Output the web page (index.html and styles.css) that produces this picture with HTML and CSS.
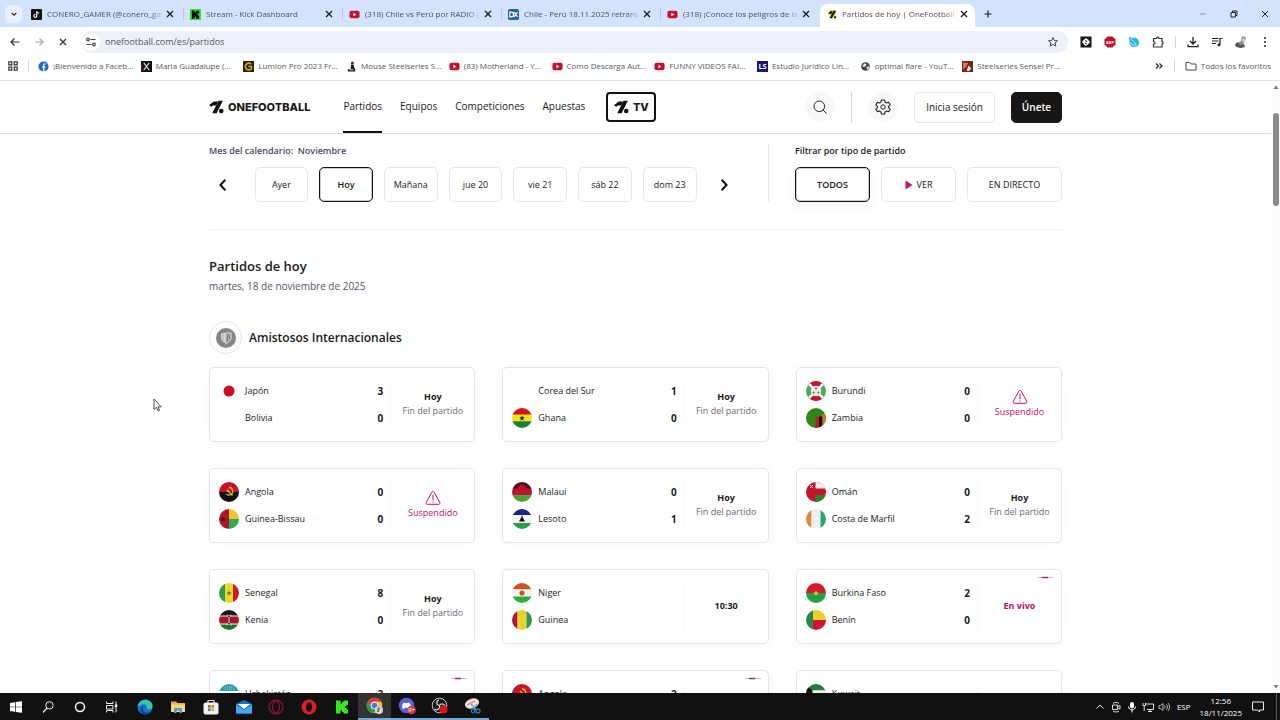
FILE: index.html
```html
<!DOCTYPE html>
<html lang="es">
<head>
    <meta charset="UTF-8">
    <meta name="viewport" content="width=device-width, initial-scale=1.0">
    <title>Partidos de hoy | OneFootball</title>
    <link rel="stylesheet" href="styles.css">
</head>
<body>

    <!-- Shared icons -->
    <svg class="sprite" aria-hidden="true">
        <symbol id="i-x" viewBox="0 0 10 10"><path d="M2 2l6 6M8 2l-6 6" fill="none" stroke="currentColor" stroke-width="1.3"/></symbol>
        <symbol id="i-yt" viewBox="0 0 12 12"><rect x="0.5" y="2" width="11" height="8" rx="2" fill="#c8102e"/><path d="M4.8 4.2v3.6L8 6z" fill="#fff"/></symbol>
        <symbol id="i-mark" viewBox="0 0 15 14"><path d="M0 5.2L4.8 1.6H9L7 5.6H3.8L2.2 6.8zM9.6 0.8h4.2L7.6 13.2H3.2z" fill="#111"/><circle cx="12.2" cy="11" r="2.3" fill="#111"/></symbol>
        <symbol id="i-warn" viewBox="0 0 16 16"><path d="M6.8 2.2L1.2 12.4C.7 13.4 1.3 14.3 2.4 14.3H13.6C14.7 14.3 15.3 13.4 14.8 12.4L9.2 2.2C8.7 1.2 7.3 1.2 6.8 2.2Z" fill="none" stroke="#c0106a"/><path d="M8 4.5v6M8 11.5v1.2" stroke="#c0106a" fill="none"/></symbol>
        <symbol id="i-live" viewBox="0 0 16 3"><path d="M0 1.5h16" stroke="#e3b5c3"/><path d="M4 1.5h6" stroke="#9c3040" stroke-width="1.5"/></symbol>
    </svg>

    <!-- Tab strip -->
    <div class="tabs">
        <button class="tab-search" aria-label="Buscar pestañas"><svg viewBox="0 0 10 10" width="8" height="8"><path d="M2 3.5l3 3 3-3" fill="none" stroke="#222" stroke-width="1.5"/></svg></button>
        <div class="tab">
            <svg class="fav" viewBox="0 0 12 12"><rect width="12" height="12" rx="1" fill="#111"/><path d="M6.3 2.5v5a1.6 1.6 0 1 1-1.6-1.6M6.3 2.5c.2 1.5 1.2 2 2.5 2.1" fill="none" stroke="#fff" stroke-width="1.3"/></svg>
            <span class="tab-title">CONERO_GAMER (@conero_ga</span>
            <button class="close" aria-label="Cerrar"><svg width="10" height="10"><use href="#i-x"/></svg></button>
        </div>
        <div class="tab">
            <svg class="fav" viewBox="0 0 12 12"><rect width="12" height="12" fill="#35e02f"/><path d="M2 1.5h3v2h1.5v-1.5H10v3H8.5v2H10v3.5H6.5V8.5H5v2H2z" fill="#111"/></svg>
            <span class="tab-title">Stream - Kick Dashboard</span>
            <button class="close" aria-label="Cerrar"><svg width="10" height="10"><use href="#i-x"/></svg></button>
        </div>
        <div class="tab">
            <svg class="fav"><use href="#i-yt"/></svg>
            <span class="tab-title">(318) Chile vs Perú por RADIO (</span>
            <button class="close" aria-label="Cerrar"><svg width="10" height="10"><use href="#i-x"/></svg></button>
        </div>
        <div class="tab">
            <svg class="fav" viewBox="0 0 12 12"><rect width="12" height="12" rx="2" fill="#24639b"/><path d="M2 3.5h2a2 2.5 0 0 1 0 5H2zM6.5 3.5l4 5M10.5 3.5l-4 5" fill="none" stroke="#fff" stroke-width="1.3"/></svg>
            <span class="tab-title">Chile - Perú 18.11.2025 retrans</span>
            <button class="close" aria-label="Cerrar"><svg width="10" height="10"><use href="#i-x"/></svg></button>
        </div>
        <div class="tab last">
            <svg class="fav"><use href="#i-yt"/></svg>
            <span class="tab-title">(318) ¡Conoce los peligros de la</span>
            <button class="close" aria-label="Cerrar"><svg width="10" height="10"><use href="#i-x"/></svg></button>
        </div>
        <div class="tab active">
            <svg class="fav" viewBox="0 0 12 12"><rect x="3" y="1" width="8" height="9" rx="2" fill="#e4f43c"/><path d="M2 5l3-2.5h2L6 5.5zM8 2h3L6.5 10H4zM9 8h2v2H9z" fill="#111"/></svg>
            <span class="tab-title">Partidos de hoy | OneFootball</span>
            <button class="close" aria-label="Cerrar"><svg width="10" height="10"><use href="#i-x"/></svg></button>
        </div>
        <button class="new-tab" aria-label="Nueva pestaña"><svg viewBox="0 0 10 10" width="10" height="10"><path d="M5 1.5v7M1.5 5h7" stroke="#222" stroke-width="1.2"/></svg></button>
        <div class="window-buttons">
            <button aria-label="Minimizar"><svg viewBox="0 0 10 10" width="10" height="10"><path d="M2 5h6" stroke="#8c99ad"/></svg></button>
            <button aria-label="Restaurar"><svg viewBox="0 0 10 10" width="10" height="10"><path d="M2 3.5h4.5v4.5H2zM3.5 3.5v-1.5H8v4.5H6.5" fill="none" stroke="#222"/></svg></button>
            <button aria-label="Cerrar ventana"><svg viewBox="0 0 10 10" width="10" height="10"><path d="M2 2l6 6M8 2l-6 6" stroke="#222"/></svg></button>
        </div>
    </div>

    <!-- Address bar -->
    <div class="toolbar">
        <div class="tool-group">
            <button aria-label="Atrás"><svg viewBox="0 0 12 12" width="12" height="12"><path d="M10.5 6H2M5.5 2.5L2 6l3.5 3.5" fill="none" stroke="#333" stroke-width="1.2"/></svg></button>
            <button aria-label="Adelante"><svg viewBox="0 0 12 12" width="12" height="12"><path d="M2 6h8M6.5 2.5L10 6 6.5 9.5" fill="none" stroke="#aaa" stroke-width="1.2"/></svg></button>
            <button aria-label="Detener"><svg viewBox="0 0 12 12" width="12" height="12"><path d="M3 3l6 6M9 3L3 9" stroke="#333" stroke-width="1.3"/></svg></button>
        </div>
        <div class="omnibox">
            <button class="site-info" aria-label="Información del sitio"><svg viewBox="0 0 12 12" width="12" height="12"><g fill="none" stroke="#444" stroke-width="1.2"><path d="M5.5 3.5h5M1.5 8.5h5"/><circle cx="3" cy="3.5" r="1.3"/><circle cx="9" cy="8.5" r="1.3"/></g></svg></button>
            <input class="url" type="text" aria-label="Dirección" value="onefootball.com/es/partidos">
            <button class="star" aria-label="Favorito"><svg viewBox="0 0 12 12" width="12" height="12"><path d="M6 1.5l1.3 3 3.2.3-2.4 2.1.7 3.2L6 8.4l-2.8 1.7.7-3.2L1.5 4.8l3.2-.3z" fill="none" stroke="#444"/></svg></button>
        </div>
        <div class="tool-group">
            <button aria-label="Extensión"><svg viewBox="0 0 12 12" width="12" height="12"><rect x="0.5" y="0.5" width="11" height="11" fill="#151515"/><path d="M6 2l2 1.500 2 2.500-1.500 2L6 10 4 8.500 2 6l1.500-2z" fill="#fff"/><path d="M5 4.5l2 1M5 7l2 1" stroke="#151515"/></svg></button>
            <button aria-label="Bloqueador"><svg viewBox="0 0 12 12" width="12" height="12"><path d="M3.5.5h5l3 3v5l-3 3h-5l-3-3v-5z" fill="#c70d2c"/><text x="6" y="7.5" font-size="4" font-weight="700" fill="#fff" text-anchor="middle">ABP</text></svg></button>
            <button aria-label="Extensión azul"><svg viewBox="0 0 12 12" width="12" height="12"><path d="M1 1l4 1c3-1 6 1 6 5 0 3-3 4.5-5.5 4C2.5 10.5 1 8 1.500 5z" fill="#29b6e8"/><path d="M2.5 2.5l6 6M2 6c1.5 3 4 3.5 6.5 3" fill="none" stroke="#d9f4ff" stroke-width=".8"/></svg></button>
            <button aria-label="Extensiones"><svg viewBox="0 0 12 12" width="12" height="12"><path d="M1.5 2.5h3c0-1.8 2.5-1.8 2.5 0h3v3c1.5.2 1.5 2.3 0 2.5v3h-8.5v-3c2 0 2-2.5 0-2.500z" fill="none" stroke="#333" stroke-width="1.2"/></svg></button>
        </div>
        <span class="sep"></span>
        <div class="tool-group">
            <button aria-label="Descargas"><svg viewBox="0 0 12 12" width="12" height="12"><path d="M6 1v6.5M3 5l3 3 3-3M1 8.5v2.2h10V8.5" fill="none" stroke="#222" stroke-width="1.3"/></svg></button>
            <button aria-label="Multimedia"><svg viewBox="0 0 12 12" width="12" height="12"><path d="M1 2.5h6.5M1 5h6.5M1 7.5h4M9 8.5v-6h2.5" fill="none" stroke="#222" stroke-width="1.2"/><circle cx="8" cy="8.7" r="1.5" fill="#222"/></svg></button>
            <button aria-label="Perfil"><svg viewBox="0 0 14 14" width="14" height="14"><path d="M8 1l2 1 1-1 1 3-2 3-1 3-3 1-2-3 3-2z" fill="#92938e"/><path d="M1 9l3-2 2 3 4-1 1 3-4 1-5-1z" fill="#555650"/><path d="M9 3l2 1-1 3-2-1z" fill="#dadad5"/></svg></button>
            <button aria-label="Menú"><svg viewBox="0 0 12 12" width="12" height="12"><g fill="#222"><circle cx="6" cy="2" r="1"/><circle cx="6" cy="6" r="1"/><circle cx="6" cy="10" r="1"/></g></svg></button>
        </div>
    </div>

    <!-- Bookmarks -->
    <div class="bookmarks">
        <button class="apps" aria-label="Aplicaciones"><svg viewBox="0 0 10 10" width="10" height="10"><path d="M.8.8h3v3h-3zM6.2.8h3v3h-3zM.8 6.2h3v3h-3zM6.2 6.2h3v3h-3z" fill="none" stroke="#333" stroke-width="1.2"/></svg></button>
        <span class="sep"></span>
        <div class="bookmark-list">
            <a href="#"><svg class="fav" viewBox="0 0 12 12"><circle cx="6" cy="6" r="5.5" fill="#1467d8"/><path d="M8.2 3.2H7.3c-.7 0-1 .4-1 1V12M4.5 6.6h3.5" fill="none" stroke="#fff" stroke-width="1.5"/></svg>¡Bienvenido a Faceb...</a>
            <a href="#"><svg class="fav" viewBox="0 0 12 12"><rect width="12" height="12" fill="#141010"/><path d="M3 2l6 8M9 2L3 10" stroke="#ddd" stroke-width="1.2"/><path d="M1 4v6h2" stroke="#8f2020" fill="none"/></svg>Maria Guadalupe (...</a>
            <a href="#"><svg class="fav" viewBox="0 0 12 12"><rect width="12" height="12" fill="#2b220d"/><path d="M9 3.5C6 1 2.5 3 2.5 6S6 11 9.2 8.5V6H6" fill="none" stroke="#d2a72c" stroke-width="1.7"/></svg>Lumion Pro 2023 Fr...</a>
            <a href="#"><svg class="fav" viewBox="0 0 12 12"><circle cx="7" cy="2.2" r="1.7" fill="#6d2020"/><path d="M5.5 4h3l.5 4h1v3.5H2V9h3z" fill="#222"/><path d="M4 9.5h4" stroke="#ddd"/></svg>Mouse Steelseries S...</a>
            <a href="#"><svg class="fav"><use href="#i-yt"/></svg>(83) Motherland - Y...</a>
            <a href="#"><svg class="fav"><use href="#i-yt"/></svg>Como Descarga Aut...</a>
            <a href="#"><svg class="fav"><use href="#i-yt"/></svg>FUNNY VIDEOS FAI...</a>
            <a href="#"><svg class="fav" viewBox="0 0 12 12"><rect width="12" height="12" fill="#17176f"/><text x="6" y="9" font-size="8" font-weight="700" fill="#fff" text-anchor="middle">LS</text></svg>Estudio Jurídico Lin...</a>
            <a href="#"><svg class="fav" viewBox="0 0 12 12"><circle cx="6" cy="6" r="4.7" fill="#444"/><path d="M2.5 5.5l2.5-3 2 1-1 2.5-2 .5zM7 7l2.5-1.5.5 2L8 9.5z" fill="#f0f0f0"/></svg>optimal flare - YouT...</a>
            <a href="#"><svg class="fav" viewBox="0 0 12 12"><rect width="12" height="12" fill="#7b2218"/><path d="M1 2h6l-3 5-3 2z" fill="#d8735c"/><path d="M7 5l3 3-2 3H5z" fill="#f0e4df"/></svg>Steelseries Sensei Pr...</a>
        </div>
        <button class="more" aria-label="Más favoritos"><svg viewBox="0 0 10 10" width="10" height="10"><path d="M2 2.5L4.5 5 2 7.5M5.5 2.5L8 5 5.5 7.5" fill="none" stroke="#222" stroke-width="1.2"/></svg></button>
        <span class="sep"></span>
        <a class="all-bookmarks" href="#"><svg viewBox="0 0 12 12" width="12" height="12"><path d="M1 2.5h3.5L6 4h5v6H1z" fill="none" stroke="#444"/></svg>Todos los favoritos</a>
    </div>

    <!-- Web page -->
    <div class="viewport">
        <div class="page">
            <header class="site-header">
                <div class="wrap header-row">
                    <a class="logo" href="#"><svg width="15" height="14"><use href="#i-mark"/></svg>ONEFOOTBALL</a>
                    <nav class="site-nav">
                        <a class="current" href="#">Partidos</a>
                        <a href="#">Equipos</a>
                        <a href="#">Competiciones</a>
                        <a href="#">Apuestas</a>
                    </nav>
                    <a class="tv" href="#"><svg width="15" height="14"><use href="#i-mark"/></svg>TV</a>
                    <div class="header-actions">
                        <button class="round" aria-label="Buscar"><svg viewBox="0 0 16 16" width="16" height="16"><circle cx="7.3" cy="7.3" r="5.3" fill="none" stroke="#222"/><path d="M11.2 11.2l3.3 3.3" stroke="#222"/></svg></button>
                        <span class="header-line"></span>
                        <button class="round" aria-label="Ajustes"><svg viewBox="0 0 16 16" width="16" height="16"><path d="M6.4 1h3.2l.5 2.1 1.5.8 2-.7 1.6 2.7-1.6 1.4v1.4l1.6 1.4-1.6 2.7-2-.7-1.5.8-.5 2.1H6.4l-.5-2.1-1.5-.8-2 .7L.8 10.1l1.6-1.4V7.3L.8 5.9l1.6-2.7 2 .7 1.5-.8z" fill="none" stroke="#222" stroke-width="1.1" stroke-linejoin="round"/><circle cx="8" cy="8" r="2.2" fill="none" stroke="#222"/></svg></button>
                        <button class="login">Inicia sesión</button>
                        <button class="join">Únete</button>
                    </div>
                </div>
            </header>

            <main class="wrap">
                <section class="filters">
                    <div class="calendar">
                        <p class="label month">Mes del calendario:&nbsp; Noviembre</p>
                        <div class="days-row">
                            <button class="arrow" aria-label="Anterior"><svg viewBox="0 0 12 12" width="14" height="14"><path d="M8 1.5L3.8 6 8 10.5" fill="none" stroke="#111" stroke-width="1.7"/></svg></button>
                            <div class="days">
                                <button class="pill">Ayer</button>
                                <button class="pill selected">Hoy</button>
                                <button class="pill">Mañana</button>
                                <button class="pill">jue 20</button>
                                <button class="pill">vie 21</button>
                                <button class="pill">sáb 22</button>
                                <button class="pill">dom 23</button>
                            </div>
                            <button class="arrow" aria-label="Siguiente"><svg viewBox="0 0 12 12" width="14" height="14"><path d="M4 1.5L8.2 6 4 10.5" fill="none" stroke="#111" stroke-width="1.7"/></svg></button>
                        </div>
                    </div>
                    <div class="types">
                        <p class="label">Filtrar por tipo de partido</p>
                        <div class="type-row">
                            <button class="pill selected raised">TODOS</button>
                            <button class="pill"><svg viewBox="0 0 8 10" width="8" height="10"><path d="M.5.5v9L7.5 5z" fill="#c0106a"/></svg>VER</button>
                            <button class="pill wide">EN DIRECTO</button>
                        </div>
                    </div>
                </section>

                <h1>Partidos de hoy</h1>
                <p class="date">martes, 18 de noviembre de 2025</p>

                <h2><span class="league"><svg viewBox="0 0 20 20" width="20" height="20"><circle cx="10" cy="10" r="10" fill="#858585"/><path d="M5 5.5l4-1v10.500c-2.500-1-4-3-4-5.500z" fill="#d8d8d8"/><path d="M9.8 5h5.2v5c0 2.5-2 4-5.2 5.500z" fill="none" stroke="#e8e8e8"/><path d="M7 5.5v7M12.5 5.5v7" stroke="#aaa"/></svg></span>Amistosos Internacionales</h2>

                <div class="matches">
                    <!-- Row 1 -->
                    <article class="match">
                        <div class="teams">
                            <div class="team"><svg class="flag" viewBox="0 0 20 20"><circle cx="10" cy="10" r="5.5" fill="#d20a1e"/></svg><span>Japón</span><b>3</b></div>
                            <div class="team"><svg class="flag" viewBox="0 0 20 20"></svg><span>Bolivia</span><b>0</b></div>
                        </div>
                        <div class="status"><b>Hoy</b><span>Fin del partido</span></div>
                    </article>
                    <article class="match">
                        <div class="teams">
                            <div class="team"><svg class="flag" viewBox="0 0 20 20"></svg><span>Corea del Sur</span><b>1</b></div>
                            <div class="team"><svg class="flag" viewBox="0 0 20 20"><path d="M0 0h20v7H0z" fill="#cf1620"/><path d="M0 6.5h20v7H0z" fill="#f5e11c"/><path d="M0 13.3h20V20H0z" fill="#1d8039"/><path d="M10 7.3l.8 2h2l-1.6 1.3.6 2-1.8-1.2-1.8 1.2.6-2-1.6-1.3h2z" fill="#222"/></svg><span>Ghana</span><b>0</b></div>
                        </div>
                        <div class="status"><b>Hoy</b><span>Fin del partido</span></div>
                    </article>
                    <article class="match">
                        <div class="teams">
                            <div class="team"><svg class="flag" viewBox="0 0 20 20"><path d="M0 0h20v20H0z" fill="#3fae5b"/><path d="M0 0h20L10 10zM0 20h20L10 10z" fill="#bb1a35"/><path d="M1 1l18 18M19 1L1 19" stroke="#f5f0ee" stroke-width="2.5"/><circle cx="10" cy="10" r="5.2" fill="#f5f0ee"/><circle cx="10" cy="7.5" r=".9" fill="#bb1a35"/><circle cx="7.5" cy="11.5" r=".9" fill="#bb1a35"/><circle cx="12.5" cy="11.5" r=".9" fill="#bb1a35"/></svg><span>Burundi</span><b>0</b></div>
                            <div class="team"><svg class="flag" viewBox="0 0 20 20"><path d="M0 0h20v20H0z" fill="#2b8a14"/><path d="M9.5 8.5h3.5V20H9.5z" fill="#c81422"/><path d="M13 8.5h3.5V20H13z" fill="#111"/><path d="M16.5 6H20v14h-3.5z" fill="#d9722a"/></svg><span>Zambia</span><b>0</b></div>
                        </div>
                        <div class="status suspended"><svg width="16" height="16"><use href="#i-warn"/></svg><span>Suspendido</span></div>
                    </article>

                    <!-- Row 2 -->
                    <article class="match">
                        <div class="teams">
                            <div class="team"><svg class="flag" viewBox="0 0 20 20"><path d="M0 0h20v10H0z" fill="#c4122b"/><path d="M0 10h20v10H0z" fill="#111"/><path d="M10 5.5c4 0 5 5 2 7-1.5 1-3.5.5-4.5-.5M8 8l5.5 5.5" fill="none" stroke="#efb62b" stroke-width="1.3"/><path d="M9 7l.5 1.2h1.3l-1 .8.4 1.3L9 9.5l-1.2.8.4-1.3-1-.8h1.3z" fill="#efb62b"/></svg><span>Angola</span><b>0</b></div>
                            <div class="team"><svg class="flag" viewBox="0 0 20 20"><path d="M0 0h10v20H0z" fill="#b3142c"/><path d="M10 0h10v10H10z" fill="#ecc72f"/><path d="M10 10h10v10H10z" fill="#2cb04c"/><path d="M4 7.5l.8 1.9h2l-1.6 1.3.6 2L4 11.5l-1.8 1.2.6-2-1.6-1.3h2z" fill="#2a0d12"/></svg><span>Guinea-Bissau</span><b>0</b></div>
                        </div>
                        <div class="status suspended"><svg width="16" height="16"><use href="#i-warn"/></svg><span>Suspendido</span></div>
                    </article>
                    <article class="match">
                        <div class="teams">
                            <div class="team"><svg class="flag" viewBox="0 0 20 20"><path d="M0 0h20v7H0z" fill="#4a1018"/><path d="M0 6.5h20v7H0z" fill="#bd1232"/><path d="M0 13.3h20V20H0z" fill="#4ba23c"/><path d="M5.5 6.7a4.5 4 0 0 1 9 0z" fill="#bd1232"/></svg><span>Malaui</span><b>0</b></div>
                            <div class="team"><svg class="flag" viewBox="0 0 20 20"><path d="M0 0h20v6H0z" fill="#18258f"/><path d="M0 6h20v8H0z" fill="#f4f4f4"/><path d="M0 14h20v6H0z" fill="#2b9f4c"/><path d="M9.5 6.5h1v1.5l2.5 4.5H7L9.5 8z" fill="#111"/></svg><span>Lesoto</span><b>1</b></div>
                        </div>
                        <div class="status"><b>Hoy</b><span>Fin del partido</span></div>
                    </article>
                    <article class="match">
                        <div class="teams">
                            <div class="team"><svg class="flag" viewBox="0 0 20 20"><path d="M0 0h20v20H0z" fill="#c4142b"/><path d="M9.5 0H20v6.5H9.5z" fill="#f0eeee"/><path d="M9.5 13H20v7H9.5z" fill="#23882d"/><path d="M4 3l3 3M7 3L4 6" stroke="#f6d8dc"/></svg><span>Omán</span><b>0</b></div>
                            <div class="team"><svg class="flag" viewBox="0 0 20 20"><path d="M0 0h5.5v20H0z" fill="#de8838"/><path d="M5.5 0h9v20h-9z" fill="#f0f0ee"/><path d="M14.5 0H20v20h-5.5z" fill="#2aa569"/></svg><span>Costa de Marfil</span><b>2</b></div>
                        </div>
                        <div class="status"><b>Hoy</b><span>Fin del partido</span></div>
                    </article>

                    <!-- Row 3 -->
                    <article class="match">
                        <div class="teams">
                            <div class="team"><svg class="flag" viewBox="0 0 20 20"><path d="M0 0h6v20H0z" fill="#2c9f49"/><path d="M6 0h8v20H6z" fill="#f3d62d"/><path d="M14 0h6v20h-6z" fill="#cf1c29"/><path d="M10 7.3l.8 2h2l-1.6 1.3.6 2-1.8-1.2-1.8 1.2.6-2-1.6-1.3h2z" fill="#3d9341"/></svg><span>Senegal</span><b>8</b></div>
                            <div class="team"><svg class="flag" viewBox="0 0 20 20"><path d="M0 0h20v6H0z" fill="#161616"/><path d="M0 5.5h20v9H0z" fill="#eee"/><path d="M0 6.5h20v7H0z" fill="#aa1729"/><path d="M0 14.5h20V20H0z" fill="#20762d"/><path d="M8 4.5l4.5 11M12 4.5l-4.5 11" stroke="#f3e4e4" stroke-width=".8"/><ellipse cx="10" cy="10" rx="2" ry="4" fill="#7a101c"/><path d="M10 7v6" stroke="#eee"/></svg><span>Kenia</span><b>0</b></div>
                        </div>
                        <div class="status"><b>Hoy</b><span>Fin del partido</span></div>
                    </article>
                    <article class="match">
                        <div class="teams">
                            <div class="team"><svg class="flag" viewBox="0 0 20 20"><path d="M0 0h20v6.5H0z" fill="#cd5420"/><path d="M0 6.5h20v7H0z" fill="#f4f3f0"/><path d="M0 13.5h20V20H0z" fill="#2bb43c"/><circle cx="10" cy="10" r="2.6" fill="#cd5420"/></svg><span>Niger</span></div>
                            <div class="team"><svg class="flag" viewBox="0 0 20 20"><path d="M0 0h5.5v20H0z" fill="#ab1730"/><path d="M5.5 0h9v20h-9z" fill="#e9d22d"/><path d="M14.5 0H20v20h-5.5z" fill="#2c9951"/></svg><span>Guinea</span></div>
                        </div>
                        <div class="status"><b>10:30</b></div>
                    </article>
                    <article class="match">
                        <svg class="live" width="16" height="3"><use href="#i-live"/></svg>
                        <div class="teams">
                            <div class="team"><svg class="flag" viewBox="0 0 20 20"><path d="M0 0h20v10H0z" fill="#cf1b2d"/><path d="M0 10h20v10H0z" fill="#23a044"/><path d="M10 7.3l.8 2h2l-1.6 1.3.6 2-1.8-1.2-1.8 1.2.6-2-1.6-1.3h2z" fill="#f4d341"/></svg><span>Burkina Faso</span><b>2</b></div>
                            <div class="team"><svg class="flag" viewBox="0 0 20 20"><path d="M0 0h7v20H0z" fill="#2a874a"/><path d="M7 0h13v10H7z" fill="#e9d12a"/><path d="M7 10h13v10H7z" fill="#ce1631"/></svg><span>Benín</span><b>0</b></div>
                        </div>
                        <div class="status playing"><b>En vivo</b></div>
                    </article>

                    <!-- Row 4 -->
                    <article class="match">
                        <svg class="live" width="16" height="3"><use href="#i-live"/></svg>
                        <div class="teams">
                            <div class="team"><svg class="flag" viewBox="0 0 20 20"><path d="M0 0h20v7H0z" fill="#2c9eb0"/><path d="M0 7h20v6H0z" fill="#fff"/><path d="M0 13h20v7H0z" fill="#2aa44a"/><path d="M6 3h9M6 5h9" stroke="#8cd3dc" stroke-dasharray="1 1"/></svg><span>Uzbekistán</span><b>2</b></div>
                        </div>
                        <div class="status"></div>
                    </article>
                    <article class="match">
                        <svg class="live" width="16" height="3"><use href="#i-live"/></svg>
                        <div class="teams">
                            <div class="team"><svg class="flag" viewBox="0 0 20 20"><path d="M0 0h20v20H0z" fill="#c4122b"/><path d="M10 5c4 0 5 5 2 7-1.5 1-3.5.5-4.5-.5M8 7l5.5 5.5" fill="none" stroke="#efb62b" stroke-width="1.3"/></svg><span>Angola</span><b>2</b></div>
                        </div>
                        <div class="status"></div>
                    </article>
                    <article class="match">
                        <div class="teams">
                            <div class="team"><svg class="flag" viewBox="0 0 20 20"><path d="M0 0h20v6.5H0z" fill="#1b7c43"/><path d="M0 6.5h20v7H0z" fill="#f3f3f3"/><path d="M0 13.5h20V20H0z" fill="#c8182b"/><path d="M0 2l6.5 4.5v7L0 18z" fill="#111"/></svg><span>Kuwait</span></div>
                        </div>
                        <div class="status"></div>
                    </article>
                </div>
            </main>
        </div>
        <div class="scrollbar">
            <svg viewBox="0 0 8 6" width="8" height="6"><path d="M1.5 5L4 1.5 6.5 5z" fill="#777"/></svg>
            <span class="thumb"></span>
            <svg class="down" viewBox="0 0 8 6" width="8" height="6"><path d="M1.5 1L4 4.5 6.5 1z" fill="#777"/></svg>
        </div>
    </div>

    <!-- Taskbar -->
    <div class="taskbar">
        <div class="system">
            <button aria-label="Inicio"><svg viewBox="0 0 14 14" width="14" height="14"><path d="M1 3l5-.8v4.5H1zM6.7 2.1L13 1.2v5.5H6.7zM1 7.3h5v4.5L1 11zM6.7 7.3H13v5.5l-6.3-.9z" fill="#fff"/></svg></button>
            <button aria-label="Buscar"><svg viewBox="0 0 14 14" width="14" height="14"><circle cx="8.5" cy="5.3" r="3.7" fill="none" stroke="#eee"/><path d="M6 8l-4 4.5" stroke="#eee" stroke-width="1.2"/></svg></button>
            <button aria-label="Cortana"><svg viewBox="0 0 14 14" width="14" height="14"><circle cx="7" cy="7" r="4.5" fill="none" stroke="#fff" stroke-width="1.5"/></svg></button>
            <button aria-label="Vista de tareas"><svg viewBox="0 0 14 14" width="14" height="14"><path d="M1.5 1.5v2h6.5v-2M1.5 12.5v-2H8v2M1.5 5.5H8v3.5H1.5zM11 1.5v11" fill="none" stroke="#eee"/><path d="M9.8 4.5h2.5v2.5H9.8z" fill="#eee"/></svg></button>
        </div>
        <div class="apps-row">
            <button aria-label="Edge"><svg viewBox="0 0 16 16" width="16" height="16"><circle cx="8" cy="8" r="7.6" fill="#1275c9"/><path d="M1 7C2 2 7 0 11 1.2c4 1.3 5.5 5 4 7.8-1 1.5-4 2-5.5.5C11 7 8 4.5 5 5.5 3 6 1.5 7 1 8z" fill="#38c4a5"/><path d="M5.5 9c0 4 4 6 8 4-2.5 3.5-8 3.2-9.5-.5C3 9.5 5 7 7 6.5 6 7 5.5 8 5.5 9z" fill="#0c3f8f"/></svg></button>
            <button aria-label="Explorador"><svg viewBox="0 0 16 16" width="16" height="16"><path d="M1 2.5h5l1.5 1.5H15v9H1z" fill="#e6b53d"/><path d="M1 5.5h14V13H1z" fill="#f7d878"/><path d="M4 9h8v5h-2.5v-2.5h-3V14H4z" fill="#4f9fd5"/></svg></button>
            <button aria-label="Tienda"><svg viewBox="0 0 16 16" width="16" height="16"><path d="M5 4V1.5h6V4" fill="none" stroke="#c8dce8" stroke-width="1.2"/><rect x="0.5" y="3.5" width="15" height="12" rx="2" fill="#f0f0ed"/><path d="M5 6h2.7v2.7H5z" fill="#e54b2b"/><path d="M8.3 6H11v2.7H8.3z" fill="#6fae2a"/><path d="M5 9.3h2.7V12H5z" fill="#258ed6"/><path d="M8.3 9.3H11V12H8.3z" fill="#edb52a"/></svg></button>
            <button aria-label="Correo"><svg viewBox="0 0 16 16" width="16" height="16"><path d="M0 5l8-4 8 4v9.5H0z" fill="#1676c7"/><path d="M1.5 5h13L8 10z" fill="#fff"/><path d="M0 6l8 5 8-5v8.5H0z" fill="#45aaf0"/></svg></button>
            <button aria-label="Opera GX"><svg viewBox="0 0 16 16" width="16" height="16"><g fill="none" stroke="#a3143d" stroke-width="1.2"><circle cx="8" cy="8" r="7"/><ellipse cx="8" cy="8" rx="3.5" ry="5.5"/></g></svg></button>
            <button aria-label="Opera"><svg viewBox="0 0 16 16" width="16" height="16"><circle cx="8" cy="8" r="7.5" fill="#dc1c2e"/><ellipse cx="8" cy="8" rx="3" ry="5" fill="#111"/></svg></button>
            <button aria-label="Kick"><svg viewBox="0 0 16 16" width="16" height="16"><path d="M2 1.5h4.5v3H8V3h1.5V1.5H14v4.5h-1.5v1.5H11v1.500h1.5v1.5H14v4H9.5V13H8v-1.5H6.5v3H2z" fill="#35e822"/></svg></button>
            <button class="running focused" aria-label="Chrome"><svg viewBox="0 0 18 18" width="18" height="18"><circle cx="8.5" cy="8.5" r="7.8" fill="#eec13a"/><path d="M1.7 4.7A7.8 7.8 0 0 1 15.3 4.7H8.5L5 10z" fill="#dc3d31"/><path d="M1.7 4.7A7.8 7.8 0 0 0 8 16.3L11 11l-5-.5z" fill="#2d9a4e"/><circle cx="8.5" cy="8.5" r="3.5" fill="#3c7bea" stroke="#fff"/><circle cx="13" cy="13" r="4" fill="#dad7cf"/><path d="M12 10l2 1-1 4h-2z" fill="#77736b"/></svg></button>
            <button class="running" aria-label="Discord"><svg viewBox="0 0 18 18" width="18" height="18"><circle cx="8.5" cy="8.5" r="7.8" fill="#5660dc"/><path d="M4 11c0-3 .8-5 2-5.5l1 .6h3l1-.6c1.2.5 2 2.5 2 5.5l-2 1-1-1.2H7L6 12z" fill="#fff"/><circle cx="13.5" cy="13" r="4.3" fill="#d33a45"/><text x="13.5" y="15" font-size="6" fill="#fff" text-anchor="middle">9+</text></svg></button>
            <button class="running" aria-label="OBS"><svg viewBox="0 0 18 18" width="18" height="18"><circle cx="8.5" cy="8.5" r="7.3" fill="#191919" stroke="#c9c9c9"/><path d="M8.5 8.5C5 8 5 3.5 8 3M8.5 8.5c2-3 6-1 5.5 2M8.5 8.5c1 3.5-3 5.5-5 3.5" fill="none" stroke="#d5d5d5" stroke-width="1.2"/><circle cx="12.5" cy="12.5" r="4" fill="#e21212"/></svg></button>
            <button class="running" aria-label="Recortes"><svg viewBox="0 0 18 18" width="18" height="18"><ellipse cx="8" cy="6.5" rx="7.3" ry="4.8" fill="#efdcdc" transform="rotate(-20 8 6.5)"/><path d="M3 8l8-4" stroke="#c57277"/><path d="M7 7l6 7M13 7l-4 6" stroke="#6f9fc5" stroke-width="1.3"/><g fill="none" stroke="#2f76b5" stroke-width="1.3"><circle cx="14" cy="14" r="2"/><circle cx="9" cy="14" r="1.8"/></g></svg></button>
        </div>
        <div class="tray">
            <svg viewBox="0 0 12 12" width="12" height="12"><path d="M2.5 7.5L6 4l3.5 3.5" fill="none" stroke="#eee"/></svg>
            <svg viewBox="0 0 12 12" width="12" height="12"><path d="M3 2.5C4.5 1 7.5 1 9 2.5M3 10c1.5 1.3 4.5 1.3 6 0M2.5 4h5v4.5h-5zM7.5 5.5l2.5-1v3.5l-2.5-1" fill="none" stroke="#ddd"/></svg>
            <svg viewBox="0 0 12 12" width="12" height="12"><rect x="4" y="1" width="4" height="6.5" rx="2" fill="#fff"/><path d="M2.5 5.5c0 4.5 7 4.5 7 0M6 9v2.5" fill="none" stroke="#fff"/></svg>
            <svg viewBox="0 0 12 12" width="12" height="12"><path d="M4 3h7.5v5.5H5M8 8.5v2M6 10.5h4M1 2v2.5h2.5V2M2.2 4.5V10" fill="none" stroke="#ddd"/></svg>
            <svg viewBox="0 0 12 12" width="12" height="12"><path d="M1 4.5h1.5L5 2.5v7L2.5 7.5H1zM6.5 4.5c.8 1 .8 2 0 3M8.3 3.3c1.5 1.5 1.5 4 0 5.5M10 2c2 2.5 2 5.5 0 8" fill="none" stroke="#ddd" stroke-width=".8"/></svg>
            <span class="lang">ESP</span>
            <span class="clock">12:56<br>18/11/2025</span>
            <svg viewBox="0 0 14 14" width="14" height="14"><path d="M1.5 2h11v8H8.5v2l-2-2h-5z" fill="none" stroke="#eee"/></svg>
        </div>
    </div>

    <svg class="pointer" viewBox="0 0 9 14" width="9" height="14"><path d="M1 1v10.5l2.4-2.2L5 13l1.5-.7L5 8.8h3.2z" fill="#fff" stroke="#222" stroke-width=".8"/></svg>

</body>
</html>
```
FILE: styles.css
```css
/* Basic page styling */
* {
    box-sizing: border-box;
}

body {
    margin: 0;
    height: 100vh;
    display: flex;
    flex-direction: column;
    overflow: hidden;
    background-color: #fff;
    color: #1a1a1a;
    font-family: "Open Sans", "Noto Sans", sans-serif;
    font-size: 9px;
    line-height: 14px;
}

p, h1, h2 {
    margin: 0;
}

a {
    color: inherit;
    text-decoration: none;
}

svg {
    display: block;
    flex: none;
}

button {
    display: flex;
    align-items: center;
    justify-content: center;
    padding: 0;
    border: none;
    background: none;
    color: inherit;
    font: inherit;
    cursor: pointer;
}

.sprite {
    position: absolute;
    width: 0;
    height: 0;
}

.fav {
    width: 11px;
    height: 11px;
}

.sep {
    width: 1px;
    height: 12px;
    background-color: #ccd6ea;
    flex: none;
}

/* Tab strip */
.tabs {
    display: flex;
    align-items: center;
    flex: none;
    height: 27px;
    padding-left: 5px;
    background-color: #d3e3fd;
    font-size: 8px;
}

.tab-search {
    width: 17px;
    height: 18px;
    margin-right: 3px;
    border-radius: 6px;
    background-color: #e8f1fd;
}

.tab {
    display: flex;
    align-items: center;
    flex: 0 1 159px;
    min-width: 0;
    height: 23px;
    padding: 0 9px 3px 6px;
    gap: 5px;
    align-self: flex-end;
    background: linear-gradient(#b4c8e8, #b4c8e8) right 4px / 1px 12px no-repeat;
}

.tab.last {
    background: none;
}

.tab.active {
    flex-basis: 155px;
    padding-right: 6px;
    border-radius: 8px 8px 0 0;
    background: #fff;
}

.tab-title {
    flex: 1;
    margin-right: -4px;
    overflow: hidden;
    white-space: nowrap;
    color: #4a5160;
    -webkit-mask-image: linear-gradient(to right, #000 88%, transparent);
    mask-image: linear-gradient(to right, #000 88%, transparent);
}

.close {
    width: 10px;
    height: 10px;
}

.new-tab {
    width: 26px;
    height: 22px;
}

.window-buttons {
    display: flex;
    margin-left: auto;
}

.window-buttons button {
    width: 31px;
    height: 26px;
}

/* Address bar */
.toolbar {
    display: flex;
    align-items: center;
    flex: none;
    height: 30px;
    padding: 0 3px;
}

.toolbar .sep {
    margin: 0 5px;
}

.tool-group {
    display: flex;
}

.tool-group button {
    width: 24px;
    height: 24px;
}

.omnibox {
    display: flex;
    align-items: center;
    flex: 1;
    height: 22px;
    margin: 0 6px;
    padding: 0 9px 0 1px;
    border-radius: 11px;
    background-color: #edf0fa;
}

.site-info {
    width: 18px;
    height: 18px;
    border-radius: 9px;
    background-color: #fff;
}

.url {
    flex: 1;
    min-width: 0;
    padding: 0 5px;
    border: none;
    outline: none;
    background: none;
    color: #50555f;
    font: inherit;
}

/* Bookmarks */
.bookmarks {
    display: flex;
    align-items: center;
    flex: none;
    height: 24px;
    padding: 0 9px 5px 8px;
    border-bottom: 1px solid #dfe1e5;
    color: #55585e;
    font-size: 8px;
}

.apps {
    margin-right: 10px;
}

.bookmark-list {
    display: flex;
    flex: 0 1 1027px;
    margin-left: 9px;
}

.bookmark-list a {
    display: flex;
    align-items: center;
    flex: 1;
    gap: 4px;
    min-width: 0;
    white-space: nowrap;
}

.more {
    margin: 0 10px 0 auto;
}

.all-bookmarks {
    display: flex;
    align-items: center;
    gap: 4px;
    margin-left: 10px;
}

/* Web page area */
.viewport {
    display: flex;
    flex: 1;
    min-height: 0;
    overflow: hidden;
}

.page {
    flex: 1;
    min-width: 0;
}

.wrap {
    width: 92%;
    max-width: 853px;
    margin: 0 auto;
}

.site-header {
    height: 53px;
    border-bottom: 1px solid #dedede;
}

.header-row {
    display: flex;
    align-items: center;
    height: 100%;
}

.logo {
    display: flex;
    align-items: center;
    gap: 4px;
    font-family: Inter, sans-serif;
    font-size: 11px;
    font-weight: 800;
}

.site-nav {
    display: flex;
    gap: 18px;
    height: 100%;
    margin-left: 33px;
    font-size: 10px;
}

.site-nav a {
    display: flex;
    align-items: center;
    border-bottom: 2px solid transparent;
}

.site-nav .current {
    border-color: #111;
}

.tv {
    display: flex;
    align-items: center;
    justify-content: center;
    gap: 4px;
    width: 50px;
    height: 30px;
    margin-left: 21px;
    border: 2px solid #111;
    border-radius: 4px;
    font-family: Inter, sans-serif;
    font-size: 11px;
    font-weight: 800;
}

.header-actions {
    display: flex;
    align-items: center;
    gap: 16px;
    margin-left: auto;
    font-size: 10px;
}

.round {
    width: 30px;
    height: 30px;
    border-radius: 15px;
    background-color: #f9f9fb;
}

.header-line {
    width: 1px;
    height: 31px;
    background-color: #d2d2d2;
}

.login,
.join {
    height: 31px;
    border: 1px solid #e6e6e6;
    border-radius: 5px;
}

.login {
    width: 81px;
}

.join {
    width: 51px;
    border-color: #161616;
    background-color: #161616;
    color: #fff;
    font-weight: 600;
}

/* Calendar and match type filters */
.filters {
    display: flex;
    padding: 10px 0 27px;
    border-bottom: 1px solid #f0f0f0;
}

.calendar {
    flex: 1;
    padding-right: 37px;
    border-right: 1px solid #e6e6e6;
}

.label {
    margin-bottom: 9px;
    font-weight: 600;
}

.month {
    color: #4a4860;
}

.days-row {
    display: flex;
    align-items: center;
    justify-content: space-between;
}

.arrow {
    width: 14px;
    height: 20px;
}

.days-row .arrow:first-child {
    margin-left: 7px;
}

.days {
    display: flex;
    gap: 11px;
    flex: 1;
    max-width: 442px;
    margin: 0 20px 0 24px;
}

.pill {
    flex: 1;
    height: 35px;
    gap: 4px;
    border: 1px solid #e6e6e6;
    border-radius: 5px;
    background-color: #fff;
    white-space: nowrap;
}

.pill.selected {
    border: 1px solid #111;
    font-weight: 600;
    box-shadow: inset 0 0 0 1px rgba(0, 0, 0, 0.2);
}

.pill.raised {
    box-shadow: inset 0 0 0 1px rgba(0, 0, 0, 0.2), 0 6px 12px rgba(0, 0, 0, 0.05);
}

.types {
    width: 293px;
    padding-left: 26px;
}

.type-row {
    display: flex;
    gap: 11px;
}

.type-row .pill {
    flex: 0 0 75px;
}

.type-row .wide {
    flex: 1;
}

/* Titles */
h1 {
    margin-top: 26px;
    font-size: 13px;
    font-weight: 600;
    line-height: 20px;
}

.date {
    margin-top: 3px;
    color: #55536a;
    font-size: 10px;
}

h2 {
    display: flex;
    align-items: center;
    gap: 7px;
    margin: 28px 0 13px;
    font-size: 12px;
    font-weight: 600;
}

.league {
    display: flex;
    align-items: center;
    justify-content: center;
    width: 33px;
    height: 33px;
    border: 1px solid #e6e6e6;
    border-radius: 50%;
}

/* Match cards */
.matches {
    display: grid;
    grid-template-columns: repeat(3, 1fr);
    gap: 26px 27px;
}

.match {
    position: relative;
    display: flex;
    height: 75px;
    padding: 13px 0 14px 9px;
    border: 1px solid #e4e4e4;
    border-radius: 5px;
    background-color: #fff;
    box-shadow: 0 2px 16px rgba(0, 0, 0, 0.03);
}

.teams {
    display: flex;
    flex-direction: column;
    flex: 1;
    gap: 7px;
    padding-right: 7px;
    border-right: 1px solid #f6f6f6;
}

.team {
    display: flex;
    align-items: center;
    gap: 6px;
    height: 20px;
}

.team b {
    margin-left: auto;
    font-size: 10px;
    font-weight: 700;
}

.flag {
    width: 20px;
    height: 20px;
    border-radius: 50%;
}

.status {
    display: flex;
    flex-direction: column;
    align-items: center;
    justify-content: center;
    width: 83px;
    color: #686a75;
}

.status b {
    color: #1a1a1a;
    font-weight: 700;
}

.suspended,
.playing b {
    color: #c0106a;
}

.live {
    position: absolute;
    top: 6px;
    right: 7px;
}

/* Scrollbar */
.scrollbar {
    display: flex;
    flex-direction: column;
    align-items: center;
    width: 9px;
    padding: 3px 0;
    background-color: #fcfcfc;
}

.thumb {
    width: 6px;
    height: 93px;
    margin-top: 23px;
    border-radius: 3px;
    background-color: #8b8b8b;
}

.down {
    margin-top: auto;
}

/* Taskbar */
.taskbar {
    display: flex;
    flex: none;
    height: 27px;
    background-color: #111;
    color: #fff;
}

.system,
.apps-row {
    display: flex;
}

.system button {
    width: 32px;
}

.apps-row {
    flex: 0 1 360px;
    margin-left: 1px;
}

.apps-row button {
    flex: 1;
}

.running {
    border-bottom: 2px solid #76a9d8;
}

.focused {
    background-color: #333;
}

.tray {
    display: flex;
    align-items: center;
    gap: 4px;
    margin: 0 3px 0 auto;
    padding-right: 11px;
    border-right: 1px solid #555;
    font-size: 8px;
    line-height: 12px;
}

.lang {
    margin: 0 3px;
}

.clock {
    margin: 0 5px 0 2px;
    text-align: center;
}

/* Mouse pointer */
.pointer {
    position: absolute;
    left: 153px;
    top: 398px;
}
```
